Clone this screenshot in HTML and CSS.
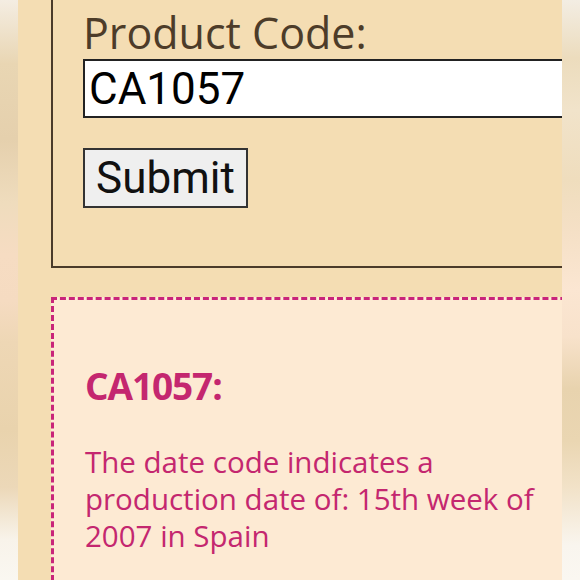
FILE: index.html
```html
<!DOCTYPE html>
<html lang="en">
<head>
    <meta charset="UTF-8">
    <meta name="viewport" content="width=device-width, initial-scale=1.0">
    <title>Date Code Lookup</title>
    <link rel="stylesheet" href="styles.css">
</head>
<body>
    <div class="screen">
        <form class="lookup-form">
            <label for="product-code">Product Code:</label>
            <input type="text" id="product-code" value="CA1057">
            <button type="button" id="submit-btn">Submit</button>
        </form>
        <div class="result">
            <h2>CA1057:</h2>
            <p>The date code indicates a production date of: 15th week of 2007 in Spain</p>
        </div>
    </div>
</body>
</html>
```

FILE: styles.css
```css
body {
    margin: 0;
    height: 580px;
    overflow: hidden;
    background-color: #f0dcbc;
    background-image:
        linear-gradient(to bottom, #f4ede2 0%, #e9d6b3 11%, #e5d0ad 24%, #efdcbd 35%, #f6dcc2 44%, #f5dbc1 52%, #eed7b5 59%, #e9d3ad 74%, #ecd8b8 84%, #f8f3ea 93%, #faf7f1 100%),
        linear-gradient(to bottom, #f3ede3 0%, #ecdcbd 10%, #f1e3ca 19%, #efddbd 31%, #f5e0c6 40%, #fbe6d2 50%, #f8e2cb 58%, #e8d3ae 67%, #ead6b2 76%, #f2e2c8 84%, #f9f5ee 94%, #faf7f1 100%);
    background-size: 18px 100%, 18px 100%;
    background-position: left top, right top;
    background-repeat: no-repeat;
}
.screen {
    margin: 0 18px;
    height: 580px;
    overflow: hidden;
    background-color: #f4ddb3;
}
.lookup-form {
    width: 560px;
    margin: -20px 0 0 33px;
    padding: 26px 0 58px 30px;
    border: 2px solid #4a3b2a;
    box-sizing: border-box;
}
.lookup-form label {
    display: block;
    font-family: "Open Sans", sans-serif;
    font-size: 43px;
    line-height: 50px;
    color: #4d3c29;
}
#product-code {
    display: block;
    width: 520px;
    height: 59px;
    margin: 1px 0 0 0;
    padding: 0 4px;
    box-sizing: border-box;
    font-family: Roboto, sans-serif;
    font-size: 44px;
    color: #000;
    background: #fff;
    border: 2px solid #222;
}
#submit-btn {
    display: block;
    width: 165px;
    height: 60px;
    margin-top: 30px;
    padding: 0;
    font-family: Roboto, sans-serif;
    font-size: 44px;
    color: #111;
    background-color: #efefef;
    border: 2px solid #333;
}
.result {
    width: 560px;
    margin: 29px 0 0 33px;
    padding: 61px 0 0 31px;
    height: 320px;
    box-sizing: border-box;
    background-color: #fdead3;
    border: 3px dashed #c9257a;
    color: #c4276f;
    font-family: "Open Sans", sans-serif;
}
.result h2 {
    margin: 0 0 32px 0;
    font-size: 37px;
    line-height: 50px;
    font-weight: bold;
    letter-spacing: -1.1px;
}
.result p {
    margin: 0;
    width: 470px;
    font-size: 29.5px;
    line-height: 37px;
}
```
